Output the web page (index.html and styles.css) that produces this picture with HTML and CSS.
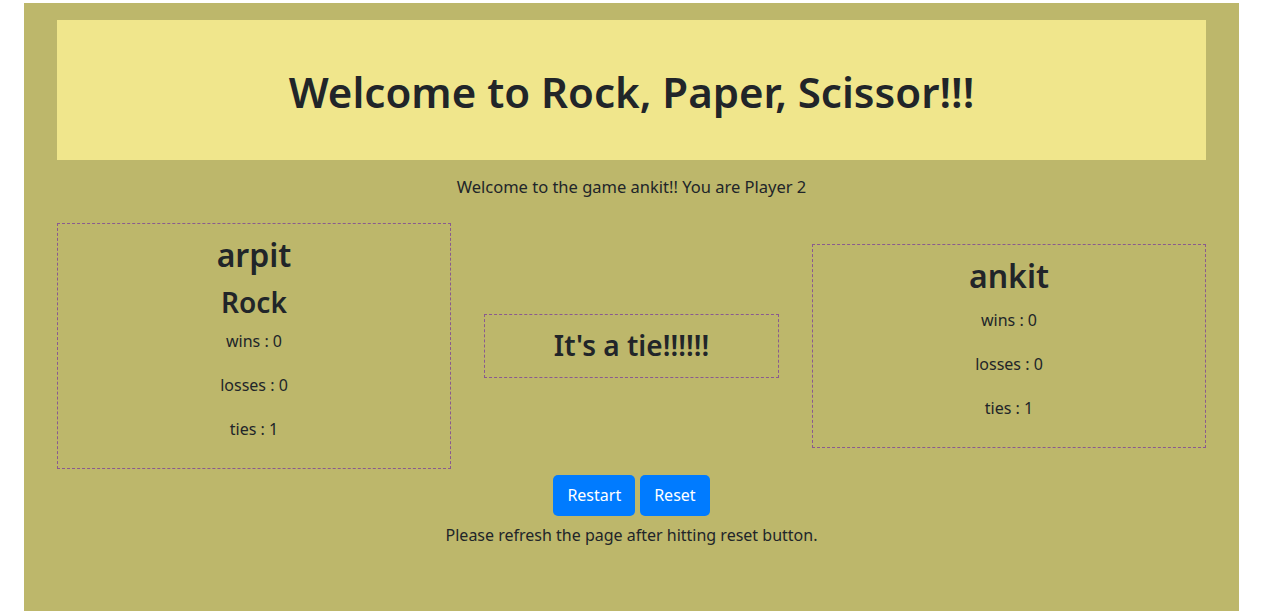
FILE: index.html
```html
<!DOCTYPE html>
<html lang="en">
<head>
    <meta charset="UTF-8">
    <meta name="viewport" content="width=device-width, initial-scale=1.0">
    <title>Rock, Paper, Scissor</title>
    <link rel="stylesheet" href="styles.css">
</head>
<body>
    <div class="main">
        <div class="banner">
            <h1>Welcome to Rock, Paper, Scissor!!!</h1>
        </div>

        <p class="greeting">Welcome to the game ankit!! You are Player 2</p>

        <div class="board">
            <div class="player-card">
                <h2 class="player-name">arpit</h2>
                <h3 class="player-move">Rock</h3>
                <p>wins : 0</p>
                <p>losses : 0</p>
                <p>ties : 1</p>
            </div>

            <div class="result-box">
                <h3>It's a tie!!!!!!</h3>
            </div>

            <div class="player-card">
                <h2 class="player-name">ankit</h2>
                <p>wins : 0</p>
                <p>losses : 0</p>
                <p>ties : 1</p>
            </div>
        </div>

        <div class="controls">
            <button class="btn">Restart</button>
            <button class="btn">Reset</button>
        </div>

        <p class="note">Please refresh the page after hitting reset button.</p>
    </div>
</body>
</html>
```

FILE: styles.css
```css
* {
    margin: 0;
    padding: 0;
    box-sizing: border-box;
}

body {
    background-color: #fff;
    font-family: "Noto Sans", "Open Sans", sans-serif;
    font-size: 16px;
    line-height: 1.5;
    color: #212529;
    padding-top: 3px;
}

.main {
    background-color: #bdb76b;
    width: 1215px;
    margin-left: 24px;
    min-height: calc(100vh - 3px);
    padding: 17px 33px 0;
    text-align: center;
}

h1, h2, h3 {
    font-weight: 600;
    line-height: 1.2;
}

.banner {
    background-color: #f0e68c;
    height: 140px;
    display: flex;
    align-items: center;
    justify-content: center;
}

.banner h1 {
    font-size: 42px;
    padding-top: 4px;
}

.greeting {
    margin-top: 15px;
    font-size: 16.5px;
    line-height: 24px;
}

.board {
    margin-top: 24px;
    display: flex;
    align-items: center;
    gap: 33px;
}

.player-card {
    width: 394px;
    border: 1px dashed #8a5a8f;
    padding: 12px 0 7px;
}

.player-name {
    font-size: 32px;
    margin-bottom: 12px;
}

.player-move {
    font-size: 28px;
    margin-bottom: 9px;
}

.player-card p {
    margin-bottom: 20px;
}

.result-box {
    width: 295px;
    height: 64px;
    border: 1px dashed #8a5a8f;
    display: flex;
    align-items: center;
    justify-content: center;
}

.result-box h3 {
    font-size: 28px;
}

.controls {
    margin-top: 6px;
    display: flex;
    justify-content: center;
    gap: 5px;
}

.btn {
    background-color: #007bff;
    color: #fff;
    border: none;
    border-radius: 5px;
    font-family: inherit;
    font-size: 16px;
    line-height: 1.5;
    padding: 8px 14px 9px;
    cursor: pointer;
}

.note {
    margin-top: 7px;
}
```
